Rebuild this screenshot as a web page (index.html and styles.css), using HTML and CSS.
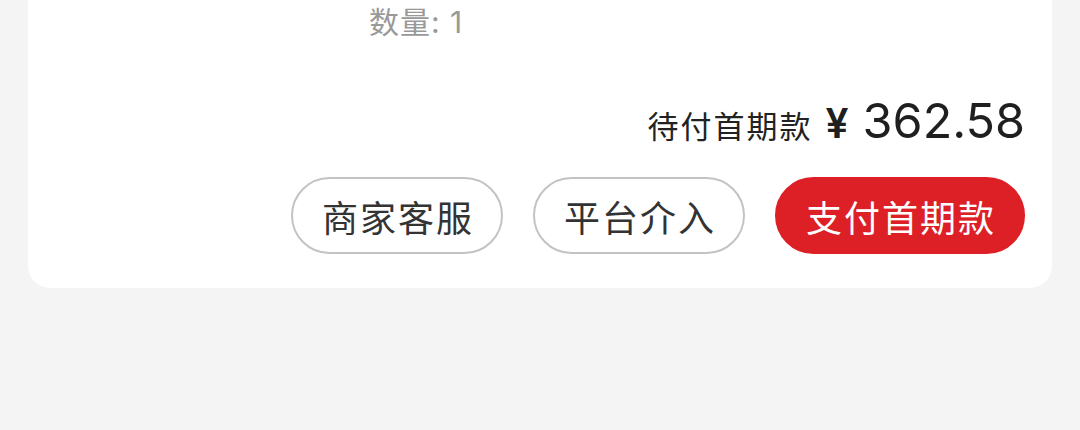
FILE: index.html
```html
<!DOCTYPE html>
<html lang="zh">
<head>
<meta charset="utf-8">
<link rel="stylesheet" href="styles.css">
</head>
<body>
<div class="card">
  <div class="qty">数量: 1</div>
  <div class="price-row">
    <span class="price-label">待付首期款</span>
    <span class="price"><span class="yen">¥</span><span class="amount">362.58</span></span>
  </div>
  <div class="actions">
    <button class="btn btn-outline">商家客服</button>
    <button class="btn btn-outline">平台介入</button>
    <button class="btn btn-primary">支付首期款</button>
  </div>
</div>
</body>
</html>
```
FILE: styles.css
```css
html, body {
  margin: 0;
  padding: 0;
  background: #f4f4f4;
  font-family: Inter, "Noto Sans CJK SC", sans-serif;
}
.card {
  margin-left: 28px;
  width: 1024px;
  box-sizing: border-box;
  background: #ffffff;
  border-radius: 0 0 22px 22px;
  padding: 0 27px 34px 0;
}
.qty {
  padding-left: 341px;
  font-size: 30px;
  line-height: 44px;
  color: #999999;
  letter-spacing: 1px;
}
.price-row {
  display: flex;
  justify-content: flex-end;
  align-items: baseline;
  gap: 13px;
  margin-top: 46px;
  height: 62px;
}
.price-label {
  font-family: "Noto Sans CJK SC", sans-serif;
  font-size: 31px;
  letter-spacing: 2px;
  color: #222222;
}
.price {
  display: flex;
  align-items: baseline;
  gap: 14px;
  color: #1f1f1f;
  line-height: 62px;
}
.yen {
  font-family: Inter, sans-serif;
  font-size: 41px;
  font-weight: 600;
}
.amount {
  font-size: 48.5px;
  font-weight: 400;
}
.actions {
  display: flex;
  justify-content: flex-end;
  gap: 30px;
  margin-top: 25px;
}
.btn {
  height: 77px;
  padding: 0 27px 0 29px;
  border-radius: 39px;
  font-family: "Noto Sans CJK SC", sans-serif;
  font-size: 36px;
  letter-spacing: 2px;
  box-sizing: border-box;
  background: #ffffff;
  cursor: pointer;
}
.btn-outline {
  border: 2px solid #c3c3c3;
  color: #333333;
}
.btn-primary {
  border: 2px solid #dd1f26;
  background: #dd1f26;
  color: #ffffff;
}
```
